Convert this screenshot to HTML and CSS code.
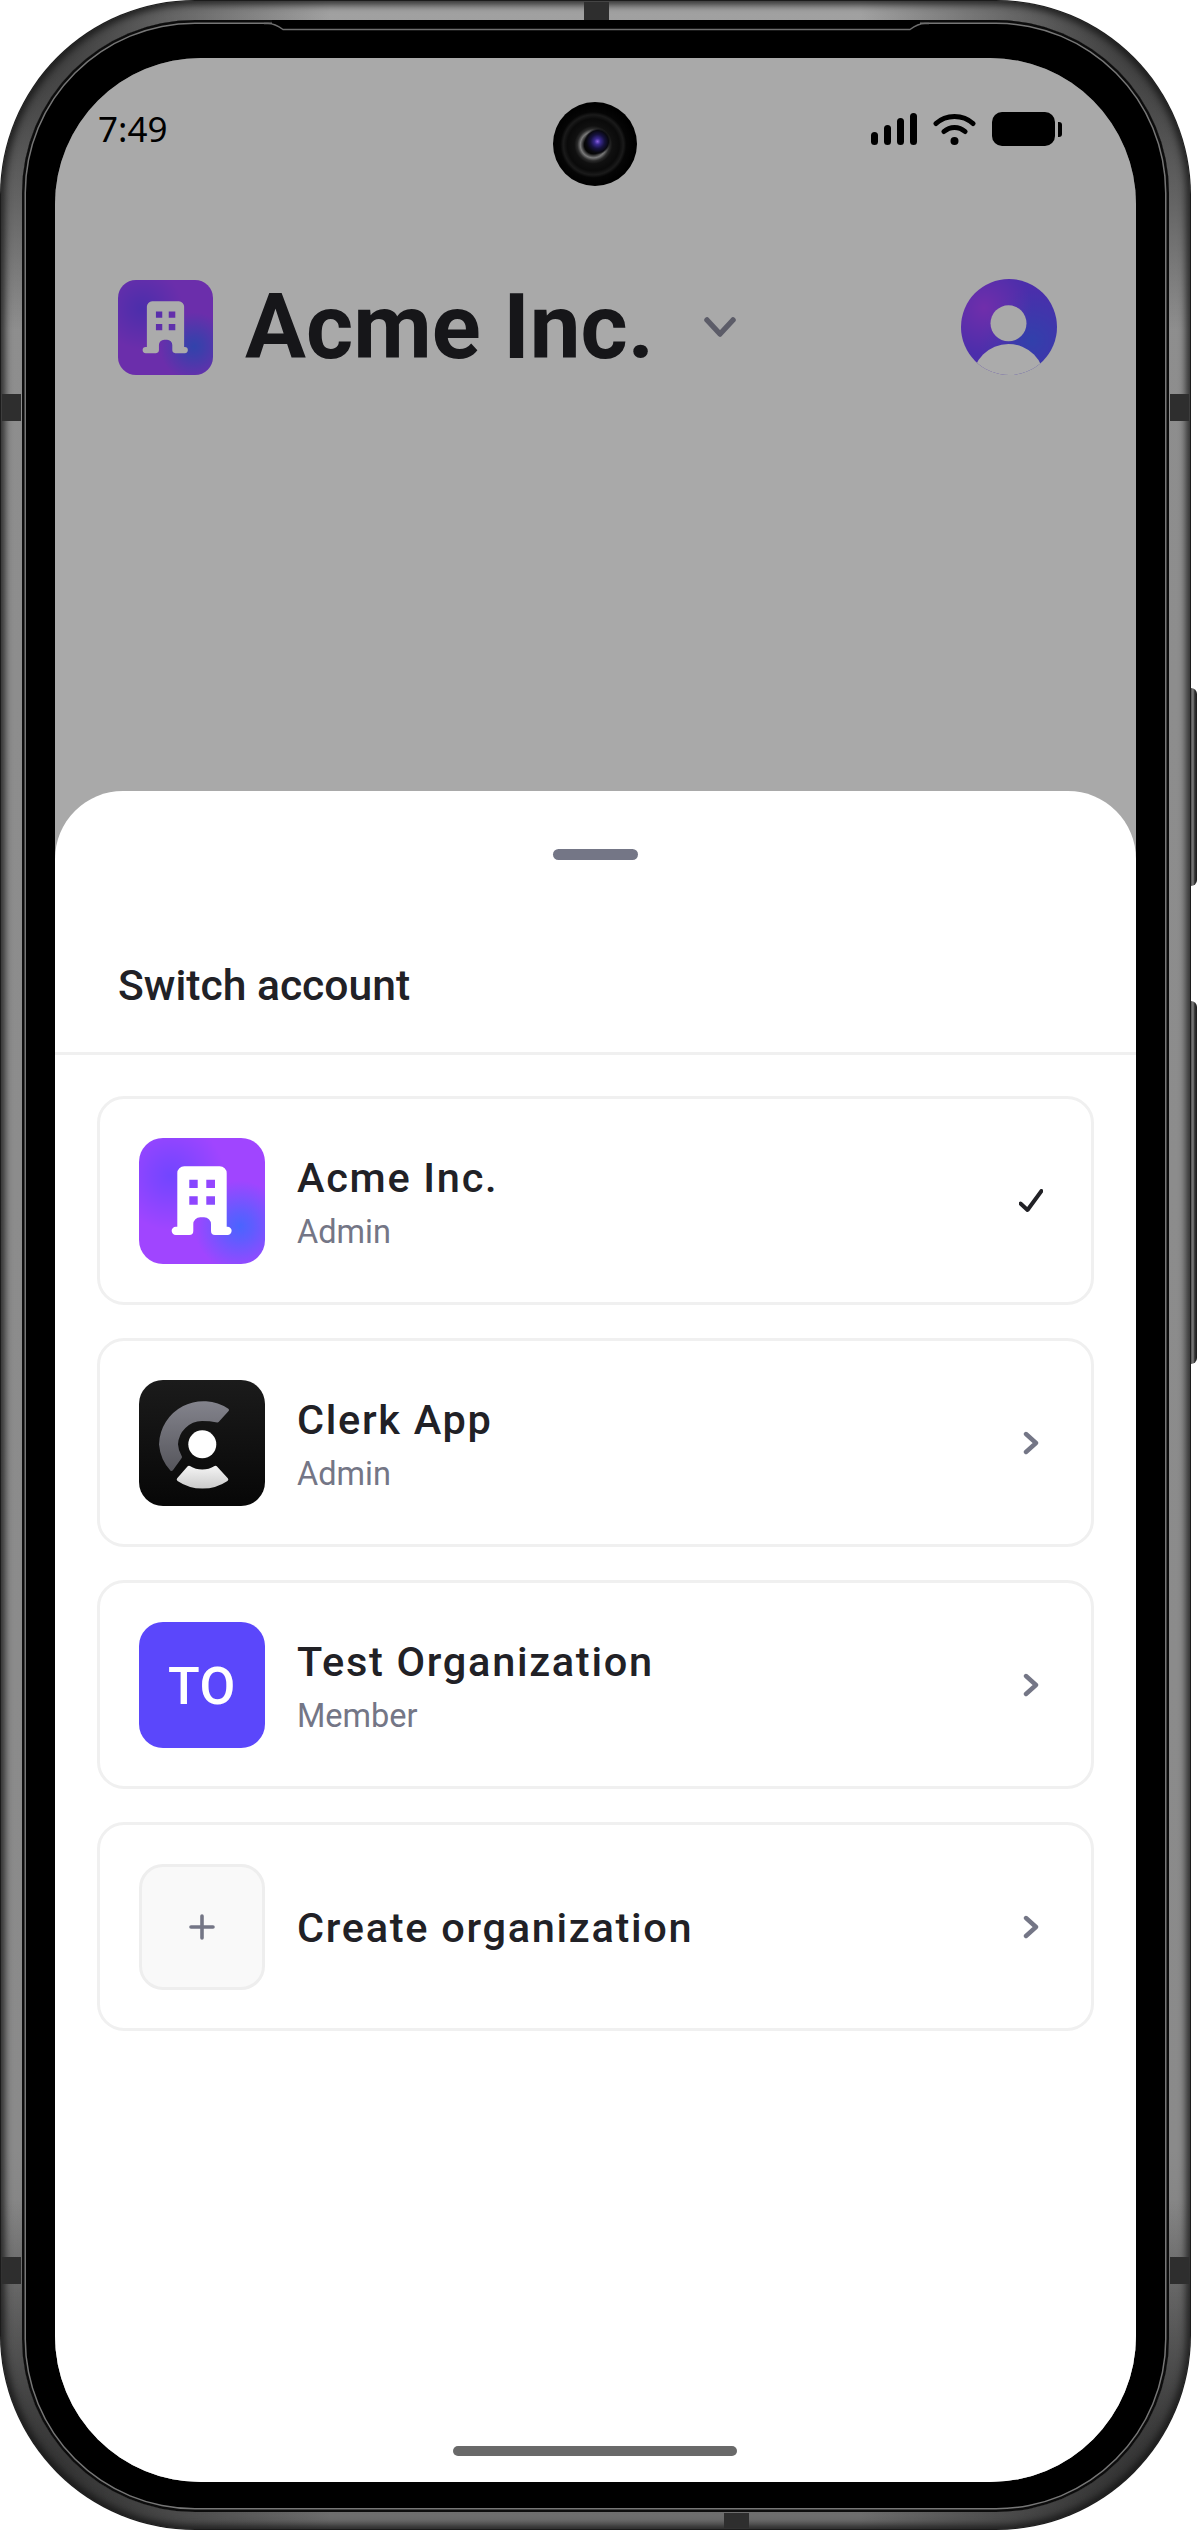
FILE: index.html
```html
<!DOCTYPE html>
<html lang="en">
<head>
<meta charset="utf-8">
<title>Switch account</title>
<link rel="stylesheet" href="styles.css">
</head>
<body>
<svg class="defs" width="0" height="0" aria-hidden="true">
  <symbol id="building" viewBox="0 0 126 126">
    <path fill="#fff" fill-rule="evenodd" d="M45.300 28.300H80.700a7 7 0 0 1 7 7V88.700h.8a4.150 4.150 0 0 1 0 8.300H76a4 4 0 0 1-4-4V86.300a7 7 0 0 0-7-7H61.300a7 7 0 0 0-7 7V93a4 4 0 0 1-4 4H36.800a4.150 4.150 0 0 1 0-8.300h1.500V35.300a7 7 0 0 1 7-7zM50.300 41.700V50H58.700V41.700zM67.300 41.700V50H76V41.700zM50.300 58.300V66.700H58.700V58.300zM67.300 58.300V66.700H76V58.300z"/>
  </symbol>
  <symbol id="chev-right" viewBox="0 0 24 24">
    <path d="M7 3l10 9-10 9" fill="none" stroke="#747686" stroke-width="4.400" stroke-linecap="round" stroke-linejoin="round"/>
  </symbol>
</svg>

<div class="device">
  <span class="side-btn side-btn-a"></span>
  <span class="side-btn side-btn-b"></span>

  <div class="phone">
    <div class="band">
      <span class="cut cut-top"></span>
      <span class="cut cut-left cut-upper"></span>
      <span class="cut cut-right cut-upper"></span>
      <span class="cut cut-left cut-lower"></span>
      <span class="cut cut-right cut-lower"></span>
      <span class="cut cut-bottom"></span>
      <div class="rim">
        <svg class="notch" width="1191" height="40" viewBox="0 0 1191 40" aria-hidden="true">
          <rect x="272" y="20" width="648" height="8" fill="#000"/>
          <path d="M264 23.500H268Q275 23.500 283 29.500H910Q918 23.500 925 23.500H929" fill="none" stroke="#6e6e6e" stroke-width="1.500"/>
        </svg>
        <div class="screen">
          <header class="app-header">
            <div class="org">
              <div class="tile tile-gradient tile-header">
                <svg class="tile-art"><use href="#building"/></svg>
              </div>
              <h1 class="org-name">Acme Inc.</h1>
              <svg class="org-chevron" width="32" height="20" viewBox="0 0 32 20" aria-hidden="true">
                <path d="M3 3l13 14L29 3" fill="none" stroke="#8a8a9c" stroke-width="5.500" stroke-linecap="round" stroke-linejoin="round"/>
              </svg>
            </div>
            <div class="user-avatar">
              <svg width="96" height="96" viewBox="0 0 96 96" aria-hidden="true">
                <circle cx="47.500" cy="44.300" r="18" fill="#fcfcfc"/>
                <circle cx="47.500" cy="101" r="36" fill="#fff"/>
              </svg>
            </div>
          </header>

          <div class="scrim"></div>

          <section class="sheet">
            <div class="handle"></div>
            <h2 class="sheet-title">Switch account</h2>
            <div class="card-list">
              <div class="card">
                <div class="tile tile-gradient">
                  <svg class="tile-art"><use href="#building"/></svg>
                </div>
                <div class="card-text">
                  <div class="card-name">Acme Inc.</div>
                  <div class="card-role">Admin</div>
                </div>
                <svg class="card-end" viewBox="0 0 24 24" aria-hidden="true">
                  <path d="M1.500 14.500l7 6.500L22.500 2" fill="none" stroke="#212126" stroke-width="4" stroke-linecap="round" stroke-linejoin="round"/>
                </svg>
              </div>

              <div class="card">
                <div class="tile tile-clerk">
                  <svg class="tile-art" viewBox="0 0 126 126" aria-hidden="true">
                    <defs>
                      <linearGradient id="clerkArc" gradientUnits="userSpaceOnUse" x1="0" y1="20" x2="0" y2="92">
                        <stop offset="0" stop-color="#84848d"/>
                        <stop offset="1" stop-color="#55555b"/>
                      </linearGradient>
                      <linearGradient id="clerkBase" gradientUnits="userSpaceOnUse" x1="0" y1="85" x2="0" y2="110">
                        <stop offset="0" stop-color="#f6f6f6"/>
                        <stop offset="1" stop-color="#c8c8c8"/>
                      </linearGradient>
                    </defs>
                    <path d="M88.500 30A43 43 0 0 0 21.500 64.300A43 43 0 0 0 32.500 89.500L41.500 77A26 26 0 0 1 37.500 64.300A26 26 0 0 1 63 39.500Q71 39.500 78.500 41z" fill="url(#clerkArc)" stroke="url(#clerkArc)" stroke-width="3" stroke-linejoin="round"/>
                    <circle cx="63.300" cy="64.300" r="14" fill="#fff"/>
                    <path d="M50 87.500A25 25 0 0 0 76.500 87.500L87.500 99.500A43 43 0 0 1 39.500 99.500z" fill="url(#clerkBase)" stroke="url(#clerkBase)" stroke-width="3.500" stroke-linejoin="round"/>
                  </svg>
                </div>
                <div class="card-text">
                  <div class="card-name">Clerk App</div>
                  <div class="card-role">Admin</div>
                </div>
                <svg class="card-end"><use href="#chev-right"/></svg>
              </div>

              <div class="card">
                <div class="tile tile-initials">TO</div>
                <div class="card-text">
                  <div class="card-name">Test Organization</div>
                  <div class="card-role">Member</div>
                </div>
                <svg class="card-end"><use href="#chev-right"/></svg>
              </div>

              <div class="card">
                <div class="tile tile-add">
                  <svg width="26" height="26" viewBox="0 0 26 26" aria-hidden="true">
                    <path d="M13 2V24M2 13H24" fill="none" stroke="#747686" stroke-width="3.600" stroke-linecap="round"/>
                  </svg>
                </div>
                <div class="card-text">
                  <div class="card-name">Create organization</div>
                </div>
                <svg class="card-end"><use href="#chev-right"/></svg>
              </div>
            </div>
            <div class="home-bar"></div>
          </section>

          <div class="status-bar">
            <span class="clock">7:49</span>
            <div class="status-icons">
              <div class="signal">
                <span class="bar bar-1"></span>
                <span class="bar bar-2"></span>
                <span class="bar bar-3"></span>
                <span class="bar bar-4"></span>
              </div>
              <svg width="43" height="32" viewBox="0 0 43 32" aria-hidden="true">
                <path d="M3 10.500C13 1 30 1 40 10.500M11 18.500C17 13 26 13 32 18.500" fill="none" stroke="#000" stroke-width="5" stroke-linecap="round"/>
                <circle cx="21.500" cy="28" r="4" fill="#000"/>
              </svg>
              <div class="battery"><span class="battery-nub"></span></div>
            </div>
          </div>
          <div class="camera"></div>
        </div>
      </div>
    </div>
  </div>
</div>
</body>
</html>
```

FILE: styles.css
```css
* { box-sizing: border-box; }

html, body {
  margin: 0;
  padding: 0;
  background: #fff;
}

body {
  font-family: Roboto, "Liberation Sans", sans-serif;
  width: 1198px;
  height: 2531px;
  overflow: hidden;
}

.defs { position: absolute; }

.device {
  position: relative;
  width: 1198px;
  height: 2531px;
}

/* ---------- hardware ---------- */
.side-btn {
  position: absolute;
  left: 1188px;
  width: 9px;
  border-radius: 0 6px 6px 0;
  background: linear-gradient(90deg, #5c5c5c 0, #5c5c5c 40%, #7f7f7f 55%, #333 75%, #1a1a1a 100%);
}
.side-btn-a { top: 688px; height: 198px; }
.side-btn-b { top: 1001px; height: 363px; }

.phone {
  position: relative;
  width: 1191px;
  height: 2530px;
  padding: 1px;
  border-radius: 195px;
  background: #1c1c1c;
}

.band {
  position: relative;
  height: 100%;
  padding: 19px 21px 17px;
  border-radius: 194px;
  background:
    radial-gradient(circle 330px at 0 0, rgba(28, 28, 28, .75) 70px, rgba(28, 28, 28, 0) 100%),
    radial-gradient(circle 330px at 100% 0, rgba(28, 28, 28, .75) 70px, rgba(28, 28, 28, 0) 100%),
    radial-gradient(circle 330px at 0 100%, rgba(28, 28, 28, .75) 70px, rgba(28, 28, 28, 0) 100%),
    radial-gradient(circle 330px at 100% 100%, rgba(28, 28, 28, .75) 70px, rgba(28, 28, 28, 0) 100%),
    linear-gradient(180deg, #a2a2a2 0, #8e8e8e 8%, #8a8a8a 85%, #6c6c6c 100%);
  box-shadow: inset 0 0 7px 4px rgba(20, 20, 20, .8);
}

.cut {
  position: absolute;
  background: #2e2e2e;
}
.cut-top { left: 583px; top: 1px; width: 25px; height: 19px; }
.cut-bottom { left: 723px; bottom: 1px; width: 25px; height: 15px; }
.cut-left { left: 1px; width: 19px; }
.cut-right { right: 1px; width: 19px; }
.cut-upper { top: 393px; height: 27px; }
.cut-lower { top: 2256px; height: 27px; }

.rim {
  position: relative;
  height: 100%;
  padding: 38px 33px 30px;
  border-radius: 173px;
  background: #000;
  box-shadow: inset 0 0 0 2.500px #0c0c0c, inset 0 0 0 4px #767676;
}

.notch {
  position: absolute;
  left: -22px;
  top: -20px;
  pointer-events: none;
}

.screen {
  position: relative;
  height: 100%;
  overflow: hidden;
  border-radius: 146px;
  background: #fcfcfc;
}

/* ---------- app behind the sheet ---------- */
.app-header {
  display: flex;
  align-items: center;
  justify-content: space-between;
  padding: 221px 79px 0 63px;
}

.org {
  display: flex;
  align-items: center;
}

.tile {
  flex: none;
  width: 126px;
  height: 126px;
  border-radius: 24px;
  overflow: hidden;
}

.tile-header {
  width: 95px;
  height: 95px;
  border-radius: 18px;
}

.tile-art {
  display: block;
  width: 100%;
  height: 100%;
}

.tile-gradient {
  background:
    radial-gradient(circle at 80% 70%, #4a64ff 0, rgba(74, 100, 255, .75) 10%, rgba(74, 100, 255, 0) 34%),
    radial-gradient(circle at 25% 30%, #7245ff 0, rgba(114, 69, 255, .7) 14%, rgba(114, 69, 255, 0) 42%),
    #a045ff;
}

.org-name {
  margin: 0 0 0 32px;
  font-size: 90.700px;
  line-height: 96px;
  font-weight: 700;
  color: #212126;
  white-space: nowrap;
}

.org-chevron {
  margin: 0 0 0 50px;
}

.user-avatar {
  width: 96px;
  height: 96px;
  border-radius: 50%;
  overflow: hidden;
  background:
    radial-gradient(circle at 24% 30%, #a845ff 0, rgba(168, 69, 255, 0) 48%),
    radial-gradient(circle at 74% 64%, #4a60ff 0, rgba(74, 96, 255, 0) 55%),
    #7045ff;
}
.user-avatar svg { display: block; }

.scrim {
  position: absolute;
  inset: 0;
  background: rgba(0, 0, 0, .33);
}

/* ---------- bottom sheet ---------- */
.sheet {
  position: absolute;
  left: 0;
  right: 0;
  top: 733px;
  bottom: 0;
  padding-top: 58px;
  border-radius: 68px 68px 0 0;
  background: #fff;
}

.handle {
  width: 85px;
  height: 11px;
  margin: 0 auto;
  border-radius: 6px;
  background: #747686;
}

.sheet-title {
  margin: 0;
  padding: 100px 63px 42px;
  border-bottom: 3px solid #f0f0f0;
  font-size: 42.600px;
  line-height: 50px;
  font-weight: 500;
  color: #212126;
}

.card-list {
  display: flex;
  flex-direction: column;
  gap: 33px;
  padding: 41px 42px 0;
}

.card {
  display: flex;
  align-items: center;
  height: 209px;
  padding: 0 48px 0 39px;
  border: 3px solid #f0f0f0;
  border-radius: 27px;
  background: #fff;
}

.tile-clerk {
  background: linear-gradient(180deg, #1b1b1b 0, #070707 100%);
}

.tile-initials {
  display: flex;
  align-items: center;
  justify-content: center;
  padding-top: 4px;
  background: #5b47fb;
  color: #fff;
  font-size: 52px;
  font-weight: 500;
  letter-spacing: .5px;
}

.tile-add {
  display: flex;
  align-items: center;
  justify-content: center;
  background: #f9f9f9;
  border: 3px solid #eeeeee;
}

.card-text {
  flex: 1;
  min-width: 0;
  margin-left: 32px;
  padding-top: 3px;
}

.card-name {
  font-size: 41.500px;
  line-height: 50px;
  font-weight: 500;
  letter-spacing: 1.700px;
  color: #212126;
  white-space: nowrap;
}

.card-role {
  margin-top: 9px;
  font-size: 32.500px;
  line-height: 40px;
  color: #747686;
  white-space: nowrap;
}

.card-end {
  flex: none;
  width: 24px;
  height: 24px;
}

.home-bar {
  position: absolute;
  left: 398px;
  bottom: 26px;
  width: 284px;
  height: 10px;
  border-radius: 5px;
  background: #696969;
}

/* ---------- status bar ---------- */
.status-bar {
  position: absolute;
  left: 43px;
  right: 81px;
  top: 49px;
  display: flex;
  align-items: center;
  justify-content: space-between;
  height: 44px;
}

.clock {
  font-family: "Noto Sans", sans-serif;
  font-size: 35px;
  line-height: 44px;
  color: #000;
}

.status-icons {
  display: flex;
  align-items: center;
  gap: 16px;
}

.signal {
  display: flex;
  align-items: flex-end;
  gap: 6px;
  height: 32px;
}

.bar {
  width: 7px;
  border-radius: 3.500px;
  background: #000;
}
.bar-1 { height: 13px; }
.bar-2 { height: 20px; }
.bar-3 { height: 27px; }
.bar-4 { height: 32px; }

.battery {
  position: relative;
  width: 63px;
  height: 34px;
  border-radius: 10px;
  background: #000;
}

.battery-nub {
  position: absolute;
  left: 66px;
  top: 10px;
  width: 4px;
  height: 15px;
  border-radius: 0 3px 3px 0;
  background: #000;
}

.camera {
  position: absolute;
  left: 498px;
  top: 44px;
  width: 84px;
  height: 84px;
  border-radius: 50%;
  background:
    radial-gradient(circle at 53% 47%, #8a60e0 0, #3a2a90 3px, #16123f 7px, #08080f 11px, rgba(0, 0, 0, 0) 13px),
    radial-gradient(circle at 48% 51%, #050505 9px, #7a7a7a 13px, #2a2a2a 16px, #101010 19px, #0a0a0a 26px, #1a1a1a 30px, #050505 33px, #000 42px);
}
```
